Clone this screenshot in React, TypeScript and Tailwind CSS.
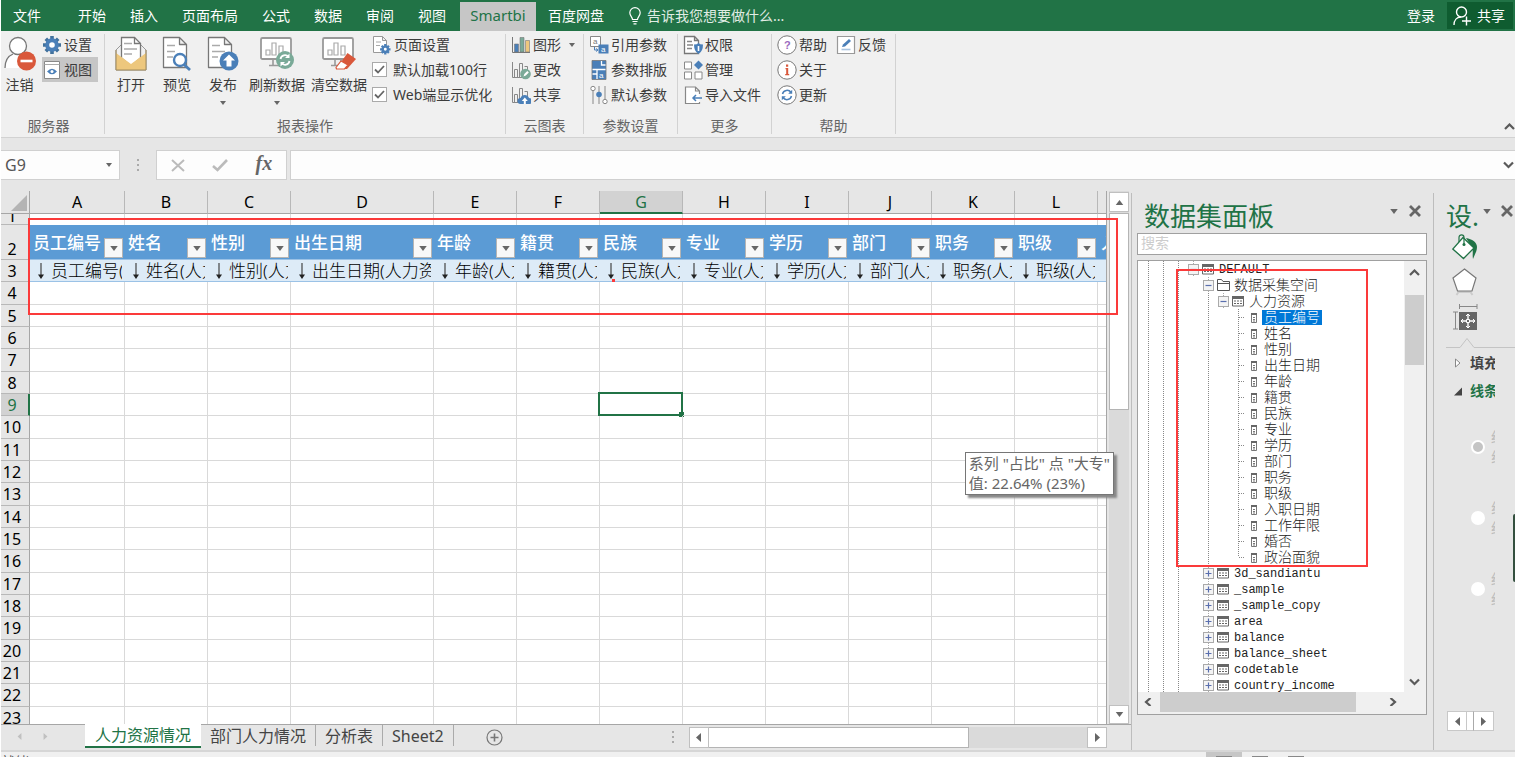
import React, { useState } from 'react';

type IconProps = { className?: string };

/* ---------- Icons ---------- */

const CaretDown: React.FC<IconProps> = ({ className = 'w-[6px] h-[4px] fill-[#666]' }) => (
    <svg viewBox="0 0 6 4" className={className} aria-hidden="true"><path d="M0 0h6L3 4z" /></svg>
);

const CaretLeft: React.FC<IconProps> = ({ className = 'w-[5px] h-[9px] fill-[#666]' }) => (
    <svg viewBox="0 0 5 9" className={className} aria-hidden="true"><path d="M5 0v9L0 4.5z" /></svg>
);

const CaretRight: React.FC<IconProps> = ({ className = 'w-[5px] h-[9px] fill-[#666]' }) => (
    <svg viewBox="0 0 5 9" className={className} aria-hidden="true"><path d="M0 0v9l5-4.5z" /></svg>
);

const chevrons = {
    up: 'M1 6l4.5-4.5L10 6',
    down: 'M1 1.5L5.500 6 10 1.500',
    left: 'M7.500 0L3 4l4.500 4',
    right: 'M3.500 0L8 4 3.500 8',
};

const Chevron: React.FC<{ dir: keyof typeof chevrons }> = ({ dir }) => (
    <svg viewBox="0 0 11 8" className="w-[11px] h-2" fill="none" stroke="#5a5a5a" strokeWidth="2.200" aria-hidden="true">
        <path d={chevrons[dir]} />
    </svg>
);

const Cross: React.FC = () => (
    <svg viewBox="0 0 12 12" className="w-3 h-3" stroke="#666" strokeWidth="2.800" aria-hidden="true">
        <path d="M1 1l10 10M11 1L1 11" />
    </svg>
);

const Page: React.FC = () => (
    <path d="M1.500 1.500h16l7 7v23h-23zM17.500 1.500v7h7" fill="#fff" stroke="#777" strokeWidth="1.300" strokeLinejoin="round" />
);

const LogoutIcon: React.FC = () => (
    <svg viewBox="0 0 32 36" className="w-8 h-9" aria-hidden="true">
        <path d="M1 32C1 23 6 18 14 18s12 5 13 14z" fill="#fff" />
        <path d="M1 32C1 24 4 20 9 18" fill="none" stroke="#777" strokeWidth="1.300" />
        <circle cx="14" cy="10" r="8.500" fill="#fff" stroke="#777" strokeWidth="1.300" />
        <circle cx="22.500" cy="25" r="9.500" fill="#d9583b" />
        <path d="M16.500 25h12" stroke="#fff" strokeWidth="2.600" />
    </svg>
);

const OpenIcon: React.FC = () => (
    <svg viewBox="0 0 32 36" className="w-8 h-9" aria-hidden="true">
        <path d="M1 14l5-5h20l5 5v20H1z" fill="#f0f0f0" stroke="#999" strokeWidth="1" />
        <path d="M6.500 1.500h13l6 6V22L16 30l-9.500-8z" fill="#fff" stroke="#777" strokeWidth="1.300" />
        <path d="M19.500 1.500v6h6" fill="none" stroke="#777" strokeWidth="1.300" />
        <path d="M9 7.500h8M9 13h13M9 18h8" stroke="#aaa" strokeWidth="1.300" />
        <path d="M1 17l15 11 15-11v17H1z" fill="#edc77d" />
        <path d="M1 14v20h30V14" fill="none" stroke="#a08a5c" strokeWidth="1" />
    </svg>
);

const PreviewIcon: React.FC = () => (
    <svg viewBox="0 0 30 36" className="w-[30px] h-9" aria-hidden="true">
        <Page />
        <path d="M5 9.500h8M5 15.500h8M5 21h6" stroke="#aaa" strokeWidth="1.300" />
        <circle cx="18" cy="24" r="6" fill="#fff" stroke="#4a7fb8" strokeWidth="2.400" />
        <path d="M22 28.500l6 5.500" stroke="#4a7fb8" strokeWidth="2.800" />
    </svg>
);

const PublishIcon: React.FC = () => (
    <svg viewBox="0 0 32 36" className="w-8 h-9" aria-hidden="true">
        <Page />
        <path d="M5 9.500h8M5 15.500h13M5 21h6" stroke="#aaa" strokeWidth="1.300" />
        <circle cx="22" cy="25" r="9.500" fill="#4a7fb8" />
        <path d="M22 18.500l-6 6h3.500v6h5v-6H28z" fill="#fff" />
    </svg>
);

const Screen: React.FC = () => (
    <>
        <rect x="1" y="2" width="30" height="21" rx="1.500" fill="#fff" stroke="#999" strokeWidth="1.800" />
        <path d="M6 19v-5h4v5zM12 19V7h4v12zM19 19v-9h4v9z" fill="#fff" stroke="#aaa" strokeWidth="1.200" />
        <path d="M13 23v6M19 23v6M9 29.500h14" stroke="#999" strokeWidth="1.600" />
    </>
);

const RefreshDataIcon: React.FC = () => (
    <svg viewBox="0 0 34 36" className="w-[34px] h-9" aria-hidden="true">
        <Screen />
        <circle cx="25" cy="24" r="9" fill="#7aaa98" />
        <path d="M20.500 23a4.500 4.500 0 0 1 8-2M29.500 25a4.500 4.500 0 0 1-8 2" fill="none" stroke="#fff" strokeWidth="1.800" />
        <path d="M29.500 17.500v4.500H25zM20.500 30.500V26H25z" fill="#fff" />
    </svg>
);

const ClearDataIcon: React.FC = () => (
    <svg viewBox="0 0 34 36" className="w-[34px] h-9" aria-hidden="true">
        <Screen />
        <path d="M25.500 17l8.500 6-9 10H14z" fill="#d9583b" />
        <path d="M19 25l7 4-3.500 4H14.500l-.500-1.500z" fill="#fff" stroke="#d9583b" strokeWidth="1.200" />
    </svg>
);

const gearTeeth = 'M10 1v18M1 10h18M3.800 3.800l12.400 12.400M16.200 3.800L3.800 16.200';

const GearIcon: React.FC = () => (
    <svg viewBox="0 0 20 20" className="w-5 h-5" aria-hidden="true">
        <path d={gearTeeth} stroke="#41719c" strokeWidth="3.600" />
        <circle cx="10" cy="10" r="4.800" fill="#fff" stroke="#4a7fb8" strokeWidth="4" />
    </svg>
);

const ViewIcon: React.FC = () => (
    <svg viewBox="0 0 20 20" className="w-5 h-5" aria-hidden="true">
        <path d="M2.500 1.500h15v17h-15z" fill="#fff" stroke="#888" />
        <path d="M2.500 4.500h15" stroke="#aaa" />
        <path d="M5 11.500q5-5.500 10 0q-5 5.500-10 0z" fill="#4a7fb8" />
        <circle cx="10" cy="11.500" r="1.500" fill="#fff" />
    </svg>
);

const PageSetupIcon: React.FC = () => (
    <svg viewBox="0 0 20 20" className="w-5 h-5" aria-hidden="true">
        <path d="M1.500 1.500h9l4 4v12h-13zM10.500 1.500v4h4" fill="#fff" stroke="#999" />
        <path d="M4 7h5M4 10.500h4" stroke="#aaa" />
        <g transform="translate(7.500 8.500) scale(.58)">
            <path d={gearTeeth} stroke="#4a7fb8" strokeWidth="4" />
            <circle cx="10" cy="10" r="4.500" fill="#fff" stroke="#4a7fb8" strokeWidth="4" />
        </g>
    </svg>
);

const ChartIcon: React.FC = () => (
    <svg viewBox="0 0 20 20" className="w-5 h-5" aria-hidden="true">
        <path d="M1.500 2v15.500H19" fill="none" stroke="#777" />
        <path d="M3.500 9h4v8h-4z" fill="#4a7fb8" />
        <path d="M9 2.500h4V17H9z" fill="#7aaa98" />
        <path d="M14.500 5.500h4V17h-4z" fill="#edc77d" />
        <path d="M3.500 9h4v8h-4zM9 2.500h4V17H9zM14.500 5.500h4V17h-4z" fill="none" stroke="#777" strokeWidth=".6" />
    </svg>
);

const Bars: React.FC = () => (
    <path d="M1.500 2v15.500H12M3.500 9.500h3v8h-3zM8.500 3.500h3v14h-3zM13.500 6.500h3v7" fill="none" stroke="#888" />
);

const ChartEditIcon: React.FC = () => (
    <svg viewBox="0 0 20 20" className="w-5 h-5" aria-hidden="true">
        <Bars />
        <circle cx="14.500" cy="14" r="5.300" fill="#7aaa98" />
        <path d="M12.500 16.500l.8-2.500 3-3 1.500 1.500-3 3z" fill="#fff" />
    </svg>
);

const ChartShareIcon: React.FC = () => (
    <svg viewBox="0 0 20 20" className="w-5 h-5" aria-hidden="true">
        <Bars />
        <path d="M9.500 19a3 3 0 0 1 0-6 4.500 4.500 0 0 1 8.500 0 3 3 0 0 1 0 6z" fill="#4a7fb8" />
        <path d="M13.800 12.500l-3 3.500h2v3h2v-3h2z" fill="#fff" />
    </svg>
);

const RefParamIcon: React.FC = () => (
    <svg viewBox="0 0 20 20" className="w-5 h-5" aria-hidden="true">
        <path d="M1.500 1.500h10v10h-10z" fill="#fff" stroke="#888" />
        <path d="M9.500 9.500h10v9h-10z" fill="#4a7fb8" />
        <path d="M5.500 12v3h3M7 13.500L9 15l-2 1.500" fill="none" stroke="#4a7fb8" />
        <text x="4" y="9" fontSize="8" fill="#777" fontFamily="Liberation Sans, sans-serif">a</text>
        <text x="12" y="17" fontSize="8" fill="#fff" fontFamily="Liberation Sans, sans-serif">a</text>
    </svg>
);

const LayoutParamIcon: React.FC = () => (
    <svg viewBox="0 0 20 20" className="w-5 h-5" aria-hidden="true">
        <path d="M3 .5h14v19H3z" fill="#4a7fb8" stroke="#777" strokeWidth=".8" />
        <path d="M12.500 1v4h4M3.500 9.500h13M8 9.500V19M3.500 14H8" fill="none" stroke="#fff" strokeWidth="1.300" />
        <text x="10" y="17.500" fontSize="8" fill="#fff" fontFamily="Liberation Sans, sans-serif">a</text>
    </svg>
);

const DefaultParamIcon: React.FC = () => (
    <svg viewBox="0 0 20 20" className="w-5 h-5" fill="#fff" stroke="#888" aria-hidden="true">
        <path d="M4 6v13M10 1v18M16 1v13" />
        <circle cx="4" cy="3.500" r="2.200" />
        <circle cx="16" cy="16.500" r="2.200" />
        <circle cx="10" cy="9.500" r="2.800" fill="#4a7fb8" stroke="none" />
    </svg>
);

const PermissionIcon: React.FC = () => (
    <svg viewBox="0 0 20 20" className="w-5 h-5" aria-hidden="true">
        <path d="M1.500 1.500h10l4 4v13h-14zM11.500 1.500v4h4" fill="#fff" stroke="#777" strokeWidth="1.300" />
        <path d="M4 6.500h5M4 10h6M4 13.500h5" stroke="#888" strokeWidth="1.300" />
        <path d="M11 9.500q3 0 4.500-1.500 1.500 1.500 4.500 1.500 0 7-4.500 9.500-4.500-2.500-4.500-9.500z" fill="#4a7fb8" />
        <path d="M15.500 11v5" stroke="#fff" strokeWidth="1.600" />
    </svg>
);

const ManageIcon: React.FC = () => (
    <svg viewBox="0 0 20 20" className="w-5 h-5" aria-hidden="true">
        <path d="M1.500 2h7v7h-7zM1.500 12h7v7h-7zM12 12h7v7h-7z" fill="#fff" stroke="#888" />
        <path d="M15.500.5L20 5l-4.500 4.500L11 5z" fill="#4a7fb8" />
    </svg>
);

const ImportIcon: React.FC = () => (
    <svg viewBox="0 0 20 20" className="w-5 h-5" aria-hidden="true">
        <path d="M16.500 9V6l-4-4h-10v16.500h14V17M12.500 2v4h4" fill="#fff" stroke="#888" strokeWidth="1.200" />
        <path d="M19 13H10M13 10l-3 3 3 3" fill="none" stroke="#4a7fb8" strokeWidth="1.500" />
    </svg>
);

const Ring: React.FC<{ children: React.ReactNode }> = ({ children }) => (
    <svg viewBox="0 0 20 20" className="w-5 h-5" aria-hidden="true">
        <circle cx="10" cy="10" r="9.200" fill="#fff" stroke="#777" />
        {children}
    </svg>
);

const HelpIcon: React.FC = () => (
    <Ring><text x="7" y="14" fontSize="11" fontWeight="bold" fill="#9b6bc0" fontFamily="Liberation Sans, sans-serif">?</text></Ring>
);

const AboutIcon: React.FC = () => (
    <Ring><path d="M9 4.500h2.200v2.300H9zM8.500 8h2.700v6h1v1.200H8.200V14h1V9.200h-.7z" fill="#d9583b" /></Ring>
);

const UpdateIcon: React.FC = () => (
    <Ring>
        <path d="M5.500 9a4.700 4.700 0 0 1 8.500-1.500M14.500 11A4.700 4.700 0 0 1 6 12.500" fill="none" stroke="#4a7fb8" strokeWidth="1.500" />
        <path d="M15.200 4.800v4h-4zM4.800 15.200v-4h4z" fill="#4a7fb8" />
    </Ring>
);

const FeedbackIcon: React.FC = () => (
    <svg viewBox="0 0 20 20" className="w-5 h-5" aria-hidden="true">
        <path d="M1.500 1.500h17v17h-17z" fill="#fff" stroke="#999" strokeWidth="1.200" />
        <path d="M6 12l1-2.500L13 4l2 2-6 5.500z" fill="#4a7fb8" />
        <path d="M5.500 14.500h9" stroke="#a9c4e0" strokeWidth="1.600" />
    </svg>
);

/* ---------- Ribbon ---------- */

const tabs = ['开始', '插入', '页面布局', '公式', '数据', '审阅', '视图'];

const TitleBar: React.FC = () => (
    <header className="flex h-[31px] shrink-0 items-stretch bg-[#217346] text-sm text-white">
        <button className="w-[65px] pl-3 text-left">文件</button>
        {tabs.map((tab) => (
            <button key={tab} className="px-3">{tab}</button>
        ))}
        <button className="mt-[2px] ml-[2px] w-[76px] bg-[#c6c6c6] pb-[2px] text-[15px] text-[#217346]">Smartbi</button>
        <button className="px-3">百度网盘</button>
        <label className="ml-[13px] flex min-w-0 flex-1 items-center gap-[6px]">
            <svg viewBox="0 0 12 18" className="h-[18px] w-3" fill="none" stroke="#fff" strokeWidth="1.200" aria-hidden="true">
                <path d="M3.500 12.500C3.500 10 .8 9 .8 5.800a5.200 5.200 0 0 1 10.400 0c0 3.200-2.700 4.200-2.700 6.700zM3.500 14.500h5M4.500 16.800h3" />
            </svg>
            <input aria-label="告诉我" placeholder="告诉我您想要做什么..." className="w-40 bg-transparent outline-none placeholder:text-[#e0ece4]" />
        </label>
        <button className="px-3">登录</button>
        <button className="my-[2px] mr-[2px] flex w-[66px] items-center gap-[6px] bg-[#0f5c30] pl-[6px]">
            <svg viewBox="0 0 18 20" className="h-5 w-[18px] shrink-0" fill="none" stroke="#fff" strokeWidth="1.400" aria-hidden="true">
                <circle cx="8.500" cy="6" r="5" />
                <path d="M1 19c0-5 3-8 7-8M9 15h9M13.500 10.500v9" />
            </svg>
            共享
        </button>
    </header>
);

const Group: React.FC<{ label: string; className: string; children: React.ReactNode }> = ({ label, className, children }) => (
    <section className={`my-[3px] flex shrink-0 flex-col justify-between border-r border-[#d2d2d2] ${className}`}>
        <div className="-mt-[2px] flex">{children}</div>
        <div className="text-center text-sm leading-4 text-[#666]">{label}</div>
    </section>
);

const BigButton: React.FC<{ icon: React.ReactNode; label: string; className: string; menu?: boolean }> = ({ icon, label, className, menu }) => (
    <button className={`flex shrink-0 flex-col items-center whitespace-nowrap pt-1 ${className}`}>
        {icon}
        <span className="mt-[3px] leading-5">{label}</span>
        {menu && <CaretDown className="mt-[6px] h-[4px] w-[6px] fill-[#666]" />}
    </button>
);

const SmallButton: React.FC<{ icon: React.ReactNode; label: string; active?: boolean; menu?: boolean }> = ({ icon, label, active, menu }) => (
    <button className={`flex h-[25px] items-center gap-[2px] whitespace-nowrap pr-[6px] ${active ? 'bg-[#c6c6c6]' : ''}`}>
        {icon}
        <span>{label}</span>
        {menu && <CaretDown className="ml-[6px] h-[4px] w-[6px] fill-[#666]" />}
    </button>
);

const RibbonCheck: React.FC<{ label: string }> = ({ label }) => (
    <label className="flex h-[25px] items-center gap-[6px] whitespace-nowrap">
        <span className="relative flex h-[15px] w-[15px]">
            <input type="checkbox" defaultChecked className="peer h-[15px] w-[15px] appearance-none border border-[#aaa] bg-white" />
            <svg viewBox="0 0 15 15" className="pointer-events-none absolute inset-0 hidden peer-checked:block" fill="none" stroke="#666" strokeWidth="1.800" aria-hidden="true">
                <path d="M3 7.500l3 3L12 4" />
            </svg>
        </span>
        {label}
    </label>
);

const Ribbon: React.FC = () => (
    <div className="relative flex h-[107px] shrink-0 border-b border-[#d2d2d2] bg-[#f0f0f0] text-sm text-[#3c3c3c]">
        <Group label="服务器" className="w-[104px] pr-2">
            <BigButton icon={<LogoutIcon />} label="注销" className="w-[37px]" />
            <div className="ml-1 flex flex-col">
                <SmallButton icon={<GearIcon />} label="设置" />
                <SmallButton icon={<ViewIcon />} label="视图" active />
            </div>
        </Group>
        <Group label="报表操作" className="w-[401px]">
            <BigButton icon={<OpenIcon />} label="打开" className="ml-[3px] w-[46px]" />
            <BigButton icon={<PreviewIcon />} label="预览" className="w-[46px]" />
            <BigButton icon={<PublishIcon />} label="发布" className="w-[46px]" menu />
            <BigButton icon={<RefreshDataIcon />} label="刷新数据" className="w-[62px]" menu />
            <BigButton icon={<ClearDataIcon />} label="清空数据" className="w-[62px]" />
            <div className="ml-[2px] flex flex-col">
                <SmallButton icon={<PageSetupIcon />} label="页面设置" />
                <RibbonCheck label="默认加载100行" />
                <RibbonCheck label="Web端显示优化" />
            </div>
        </Group>
        <Group label="云图表" className="w-[78px]">
            <div className="ml-[5px] flex flex-col">
                <SmallButton icon={<ChartIcon />} label="图形" menu />
                <SmallButton icon={<ChartEditIcon />} label="更改" />
                <SmallButton icon={<ChartShareIcon />} label="共享" />
            </div>
        </Group>
        <Group label="参数设置" className="w-[94px]">
            <div className="ml-[5px] flex flex-col">
                <SmallButton icon={<RefParamIcon />} label="引用参数" />
                <SmallButton icon={<LayoutParamIcon />} label="参数排版" />
                <SmallButton icon={<DefaultParamIcon />} label="默认参数" />
            </div>
        </Group>
        <Group label="更多" className="w-[94px]">
            <div className="ml-[5px] flex flex-col">
                <SmallButton icon={<PermissionIcon />} label="权限" />
                <SmallButton icon={<ManageIcon />} label="管理" />
                <SmallButton icon={<ImportIcon />} label="导入文件" />
            </div>
        </Group>
        <Group label="帮助" className="w-[124px]">
            <div className="ml-[5px] flex flex-col">
                <SmallButton icon={<HelpIcon />} label="帮助" />
                <SmallButton icon={<AboutIcon />} label="关于" />
                <SmallButton icon={<UpdateIcon />} label="更新" />
            </div>
            <div className="ml-[3px] flex flex-col">
                <SmallButton icon={<FeedbackIcon />} label="反馈" />
            </div>
        </Group>
        <button aria-label="折叠功能区" className="mb-[6px] ml-auto self-end"><Chevron dir="up" /></button>
    </div>
);

const FormulaBar: React.FC = () => (
    <div className="flex h-[53px] shrink-0 items-stretch pt-3 pb-[11px]">
        <div className="flex w-[119px] items-center border border-l-0 border-[#d0d0d0] bg-[#fdfdfd] pr-[7px]">
            <input aria-label="名称框" defaultValue="G9" className="min-w-0 flex-1 bg-transparent pl-1 text-base text-[#555] outline-none" />
            <CaretDown />
        </div>
        <div className="flex w-9 flex-col items-center justify-center gap-[3px]">
            <i className="h-[2px] w-[2px] bg-[#aaa]" />
            <i className="h-[2px] w-[2px] bg-[#aaa]" />
            <i className="h-[2px] w-[2px] bg-[#aaa]" />
        </div>
        <div className="flex w-[131px] items-center justify-around border border-[#d0d0d0] bg-[#fdfdfd]">
            <button aria-label="取消">
                <svg viewBox="0 0 14 13" className="h-[13px] w-[14px]" stroke="#bbb" strokeWidth="2" aria-hidden="true"><path d="M1 1l12 11M13 1L1 12" /></svg>
            </button>
            <button aria-label="输入">
                <svg viewBox="0 0 16 13" className="h-[13px] w-4" fill="none" stroke="#bbb" strokeWidth="2.600" aria-hidden="true"><path d="M1 7l4.500 4L15 1" /></svg>
            </button>
            <button className="pb-1 font-['Liberation_Serif',serif] text-xl leading-5 font-bold text-[#666] italic">fx</button>
        </div>
        <div className="ml-[3px] flex min-w-0 flex-1 items-center border border-r-0 border-[#d0d0d0] bg-[#fdfdfd] pr-[1px]">
            <input aria-label="编辑栏" className="min-w-0 flex-1 bg-transparent px-2 outline-none" />
            <Chevron dir="down" />
        </div>
    </div>
);

/* ---------- Worksheet ---------- */

const columns = [
    { id: 'A', field: '员工编号', width: 'w-[95px]' },
    { id: 'B', field: '姓名', width: 'w-[83px]' },
    { id: 'C', field: '性别', width: 'w-[83px]' },
    { id: 'D', field: '出生日期', width: 'w-[143px]' },
    { id: 'E', field: '年龄', width: 'w-[83px]' },
    { id: 'F', field: '籍贯', width: 'w-[83px]' },
    { id: 'G', field: '民族', width: 'w-[83px]' },
    { id: 'H', field: '专业', width: 'w-[83px]' },
    { id: 'I', field: '学历', width: 'w-[83px]' },
    { id: 'J', field: '部门', width: 'w-[83px]' },
    { id: 'K', field: '职务', width: 'w-[83px]' },
    { id: 'L', field: '职级', width: 'w-[83px]' },
    { id: 'M', field: '入职日期', width: 'w-[83px]' },
];

const emptyRows = Array.from({ length: 20 }, (_, i) => i + 4);

const rowHead = 'border-r border-b border-r-[#a6a6a6] border-b-[#b8b8b8] bg-[#e6e6e6] p-0 pr-[6px] font-normal';

const Sheet: React.FC = () => (
    <div className="min-w-0 flex-1 overflow-hidden border-r border-[#a6a6a6] bg-white">
        <table className="w-0 table-fixed border-separate border-spacing-0 text-base leading-5 text-black">
            <colgroup>
                <col className="w-[29px]" />
                {columns.map((c) => <col key={c.id} className={c.width} />)}
            </colgroup>
            <thead>
                <tr className="h-[23px] bg-[#e6e6e6]">
                    <th className="border-r border-b border-[#a6a6a6] p-0" aria-label="全选">
                        <svg viewBox="0 0 16 16" className="mt-[2px] ml-auto mr-[2px] h-4 w-4 fill-[#b4b4b4]" aria-hidden="true"><path d="M16 0v16H0z" /></svg>
                    </th>
                    {columns.map((c) => (
                        <th
                            key={c.id}
                            className={`border-r border-r-[#b8b8b8] p-0 font-normal ${
                                c.id === 'G' ? 'border-b-2 border-b-[#217346] bg-[#d2d2d2] text-[#217346]' : 'border-b border-b-[#a6a6a6]'
                            }`}
                        >
                            {c.id === 'M' ? '' : c.id}
                        </th>
                    ))}
                </tr>
            </thead>
            <tbody>
                <tr>
                    <th className={rowHead}>
                        <div className="flex h-[10px] items-end justify-center overflow-hidden"><span className="leading-4">1</span></div>
                    </th>
                    {columns.map((c) => <td key={c.id} className="border-r border-[#d9d9d9] p-0" />)}
                </tr>
                <tr className="h-[35px]">
                    <th className={`${rowHead} align-bottom`}>2</th>
                    {columns.map((c) => (
                        <td key={c.id} className="border-b border-[#9bc2e6] bg-[#5b9bd5] p-0">
                            <div className="relative h-[34px] overflow-hidden pt-2 pl-[3px] text-[17px] font-medium whitespace-nowrap text-white">
                                {c.field}
                                <button aria-label={`筛选${c.field}`} className="absolute right-[2px] bottom-[1px] flex h-5 w-[19px] items-center justify-center border border-[#b4b4b4] bg-[#f8f8f8]">
                                    <CaretDown className="h-[5px] w-2 fill-[#666]" />
                                </button>
                            </div>
                        </td>
                    ))}
                </tr>
                <tr className="h-[22px]">
                    <th className={rowHead}>3</th>
                    {columns.map((c) => (
                        <td key={c.id} className="relative border-b border-[#9bc2e6] bg-[#ddebf7] p-0">
                            <div className="mr-[3px] flex h-[21px] items-center overflow-hidden pl-[5px] text-[17px] font-light whitespace-nowrap">
                                <svg viewBox="0 0 6 16" className="mr-[7px] ml-[3px] h-4 w-[6px] shrink-0" aria-hidden="true">
                                    <path d="M3 0v13" stroke="#444" strokeWidth="1.200" />
                                    <path d="M0 11.500h6L3 16z" fill="#222" />
                                </svg>
                                {c.field}(人力资源)
                            </div>
                            {c.id === 'G' && <i className="absolute bottom-[-1px] left-3 h-[3px] w-[3px] bg-[#fb3a3a]" />}
                        </td>
                    ))}
                </tr>
                {emptyRows.map((n, i) => (
                    <tr key={n} className={i % 3 === 0 ? 'h-[23px]' : 'h-[22px]'}>
                        <th className={n === 9 ? 'border-r-2 border-b border-r-[#217346] border-b-[#b8b8b8] bg-[#d2d2d2] p-0 pr-[5px] font-normal text-[#217346]' : rowHead}>{n}</th>
                        {columns.map((c) => (
                            <td key={c.id} className="relative border-r border-b border-[#d9d9d9] p-0">
                                {n === 9 && c.id === 'G' && (
                                    <div className="absolute -inset-[2px] right-[-1px] bottom-[-1px] border-2 border-[#217346]">
                                        <i className="absolute -right-[3px] -bottom-[3px] h-[5px] w-[5px] bg-[#217346]" />
                                    </div>
                                )}
                            </td>
                        ))}
                    </tr>
                ))}
            </tbody>
        </table>
    </div>
);

const SheetTabs: React.FC = () => {
    const [current, setCurrent] = useState('人力资源情况');

    return (
        <div className="flex h-[26px] shrink-0 border-t border-[#a6a6a6] pb-[2px] text-base text-[#444]">
            <div className="flex w-[84px] items-center gap-[21px] pl-4">
                <CaretLeft className="h-[7px] w-[5px] fill-[#c0c0c0]" />
                <CaretRight className="h-[7px] w-[5px] fill-[#c0c0c0]" />
            </div>
            {['人力资源情况', '部门人力情况', '分析表', 'Sheet2'].map((name) => (
                <button
                    key={name}
                    onClick={() => setCurrent(name)}
                    className={`shrink-0 leading-5 ${
                        name === current ? '-mt-px border-b-2 border-[#217346] bg-white px-[10px] text-[#217346]' : 'mb-[2px] border-r border-[#aaa] px-[9px]'
                    }`}
                >
                    {name}
                </button>
            ))}
            <button aria-label="新工作表" className="ml-8 pt-[2px]">
                <svg viewBox="0 0 17 17" className="h-[17px] w-[17px]" fill="none" stroke="#777" strokeWidth="1.200" aria-hidden="true">
                    <circle cx="8.500" cy="8.500" r="7.500" />
                    <path d="M8.500 4.500v8M4.500 8.500h8" strokeWidth="1.600" />
                </svg>
            </button>
            <div className="mr-[14px] ml-auto flex w-[3px] flex-col items-center justify-center gap-[3px]">
                <i className="h-[2px] w-[2px] bg-[#aaa]" />
                <i className="h-[2px] w-[2px] bg-[#aaa]" />
                <i className="h-[2px] w-[2px] bg-[#aaa]" />
            </div>
            <div className="mt-[2px] mr-6 flex w-[37%] items-stretch bg-[#dadada]">
                <button aria-label="向左滚动" className="flex w-5 items-center justify-center border border-[#c0c0c0] bg-white"><CaretLeft /></button>
                <div className="w-[260px] border border-l-0 border-[#b4b4b4] bg-white" />
                <button aria-label="向右滚动" className="ml-auto flex w-5 items-center justify-center border border-[#c0c0c0] bg-white"><CaretRight /></button>
            </div>
        </div>
    );
};

const Workbook: React.FC = () => (
    <main className="relative flex min-w-0 flex-1 flex-col">
        <div className="flex min-h-0 flex-1">
            <Sheet />
            <div className="mr-[2px] ml-[2px] flex w-5 flex-col bg-[#dadada] pt-[1px]">
                <button aria-label="向上滚动" className="flex h-5 shrink-0 items-center justify-center border border-[#c0c0c0] bg-white">
                    <CaretDown className="h-[5px] w-[9px] rotate-180 fill-[#666]" />
                </button>
                <div className="mt-[1px] h-[37%] border border-[#b4b4b4] bg-white" />
                <button aria-label="向下滚动" className="mt-auto flex h-[19px] shrink-0 items-center justify-center border border-[#c0c0c0] bg-white">
                    <CaretDown className="h-[5px] w-[9px] fill-[#666]" />
                </button>
            </div>
        </div>
        <SheetTabs />
        {/* highlight around the linked fields */}
        <div className="pointer-events-none absolute top-[27px] right-[13px] left-[27px] h-[97px] border-2 border-[#fb3a3a]" />
        <div role="tooltip" className="absolute top-[261px] right-[17px] border border-[#767676] bg-white px-[3px] pb-px text-[15px] leading-5 whitespace-nowrap text-[#666] shadow-[3px_3px_2px_#888]">
            系列 "占比" 点 "大专"<br />
            值: 22.64% (23%)
        </div>
    </main>
);

/* ---------- Dataset panel ---------- */

type TreeNode = { label: string; kind: 'space' | 'folder' | 'table' | 'field'; open?: boolean };

const fields = ['员工编号', '姓名', '性别', '出生日期', '年龄', '籍贯', '民族', '专业', '学历', '部门', '职务', '职级', '入职日期', '工作年限', '婚否', '政治面貌'];
const tables = ['3d_sandiantu', '_sample', '_sample_copy', 'area', 'balance', 'balance_sheet', 'codetable', 'country_income'];

const Guide: React.FC<{ line?: boolean; last?: boolean; branch?: boolean }> = ({ line, last, branch }) => (
    <svg viewBox="0 0 15 16" className="h-4 w-[15px] shrink-0" stroke="#888" strokeDasharray="1 1" aria-hidden="true">
        {line && <path d={last ? 'M8.500 0v8' : 'M8.500 0v16'} />}
        {branch && <path d="M9 8.500h6" />}
    </svg>
);

const Expander: React.FC<{ open?: boolean }> = ({ open }) => (
    <button aria-label={open ? '折叠' : '展开'} className="h-4 w-[15px] shrink-0">
        <svg viewBox="0 0 15 16" className="h-4 w-[15px]" aria-hidden="true">
            <path d="M8.500 0v16" stroke="#aaa" strokeDasharray="1 1" />
            <rect x="3.500" y="3.500" width="10" height="10" fill="#f4f4f4" stroke="#aaa" />
            <path d={open ? 'M5.500 8.500h6' : 'M5.500 8.500h6M8.500 5.500v6'} stroke="#5a6fae" strokeWidth="1.200" />
        </svg>
    </button>
);

const NodeIcon: React.FC<{ kind: TreeNode['kind'] }> = ({ kind }) => (
    <svg viewBox="0 0 16 16" className="ml-px h-4 w-4 shrink-0" aria-hidden="true">
        {kind === 'folder' && <path d="M1.500 13.500v-11h4l1.500 2h6.500v9zM1.500 6.500h12" fill="#fff" stroke="#555" />}
        {(kind === 'table' || kind === 'space') && (
            <>
                <path d="M1.500 3.500h11v9.500h-11z" fill="#fff" stroke="#666" />
                <path d="M1 3h12v3H1z" fill="#666" />
                <path d="M3 8h2M6 8h2M9 8h2M3 10.500h2M6 10.500h2M9 10.500h2" stroke="#666" />
            </>
        )}
        {kind === 'field' && (
            <>
                <path d="M5.500 4.500h5v9h-5z" fill="#fff" stroke="#777" />
                <path d="M5 4h6v2H5z" fill="#666" />
                <path d="M7 8.500h2M7 10.500h2M7 12h2" stroke="#777" />
            </>
        )}
    </svg>
);

const treeText = "mt-px px-[2px] font-['Liberation_Mono','Noto_Sans_CJK_SC',monospace] leading-4 whitespace-nowrap";

const DatasetTree: React.FC = () => (
    <ul className="min-w-0 flex-1 overflow-hidden bg-white pl-[2px] font-light text-[#222]">
        <li className="flex h-4">
            <Guide line /><Guide line /><Guide line /><Expander open /><NodeIcon kind="space" />
            <span className={`${treeText} text-xs`}>DEFAULT</span>
        </li>
        <li className="flex h-4">
            <Guide line /><Guide line /><Guide line /><Guide /><Expander open /><NodeIcon kind="folder" />
            <span className={`${treeText} text-sm`}>数据采集空间</span>
        </li>
        <li className="flex h-4">
            <Guide line /><Guide line /><Guide line /><Guide /><Guide line /><Expander open /><NodeIcon kind="table" />
            <span className={`${treeText} text-sm`}>人力资源</span>
        </li>
        {fields.map((name, i) => (
            <li key={name} className="flex h-4">
                <Guide line /><Guide line /><Guide line /><Guide /><Guide line /><Guide />
                <Guide line branch last={i === fields.length - 1} />
                <NodeIcon kind="field" />
                <span className={`${treeText} text-sm ${i === 0 ? 'bg-[#0078d7] text-white' : ''}`}>{name}</span>
            </li>
        ))}
        {tables.map((name) => (
            <li key={name} className="flex h-4">
                <Guide line /><Guide line /><Guide line /><Guide /><Expander /><NodeIcon kind="table" />
                <span className={`${treeText} text-xs`}>{name}</span>
            </li>
        ))}
    </ul>
);

const DatasetPanel: React.FC = () => (
    <aside className="mt-[2px] flex w-[302px] shrink-0 flex-col border-l border-[#bdbdbd] pr-[6px] pb-[35px] pl-[5px]">
        <div className="flex h-10 shrink-0 items-start pl-[7px]">
            <h2 className="pt-[5px] text-[26px] leading-9 text-[#217346]">数据集面板</h2>
            <button aria-label="面板选项" className="mt-4 ml-auto"><CaretDown className="h-[5px] w-[10px] fill-[#666]" /></button>
            <button aria-label="关闭" className="mt-3 mr-[6px] ml-[10px]"><Cross /></button>
        </div>
        <input aria-label="搜索" placeholder="搜索" className="h-[22px] shrink-0 border border-[#a0a0a0] bg-white px-[3px] pb-1 text-sm outline-none placeholder:text-[#ccc]" />
        <div className="relative mt-[5px] flex min-h-0 flex-1 flex-col border border-[#a0a0a0] bg-[#f0f0f0] pr-[2px] pb-[2px]">
            <div className="flex min-h-0 flex-1">
                <DatasetTree />
                <div className="flex w-5 shrink-0 flex-col items-center pt-2 pb-[6px]">
                    <Chevron dir="up" />
                    <div className="mt-[18px] h-[70px] w-[19px] bg-[#cdcdcd]" />
                    <div className="mt-auto flex"><Chevron dir="down" /></div>
                </div>
            </div>
            <div className="flex h-5 shrink-0 items-center pr-[26px] pl-[5px]">
                <Chevron dir="left" />
                <div className="mr-auto ml-[6px] h-full w-[77%] bg-[#cdcdcd]" />
                <Chevron dir="right" />
            </div>
            <div className="pointer-events-none absolute top-2 left-[38px] h-[298px] w-[192px] border-2 border-[#fb3a3a]" />
        </div>
    </aside>
);

/* ---------- Format panel ---------- */

const FormatPanel: React.FC = () => (
    <aside className="relative mt-[2px] flex w-[82px] shrink-0 flex-col border-l border-[#bdbdbd]">
        <div className="flex h-[41px] shrink-0 items-start pl-3">
            <h2 className="w-9 pt-[5px] text-[26px] leading-9 text-[#217346]">设.</h2>
            <button aria-label="窗格选项" className="mt-4 shrink-0"><CaretDown className="h-[5px] w-[10px] fill-[#666]" /></button>
            <button aria-label="关闭" className="mt-3 ml-[9px] shrink-0"><Cross /></button>
        </div>
        <div className="flex flex-col items-start gap-2 pl-[18px]">
            <button aria-label="填充与线条">
                <svg viewBox="0 0 26 26" className="h-[26px] w-[26px]" aria-hidden="true">
                    <path d="M14 4c6 1 11 4 11 9 0 4-2 7-4 12-1-5 1-9-2-13z" fill="#217346" />
                    <path d="M11 3.500L22 14 11.500 24.500.8 15z" fill="#fff" stroke="#217346" strokeWidth="1.300" />
                    <path d="M7 8V3.500c0-3.500 5-3.500 5 0V10" fill="none" stroke="#217346" strokeWidth="1.200" />
                    <circle cx="12" cy="10.500" r="1.500" fill="#217346" />
                </svg>
            </button>
            <button aria-label="效果">
                <svg viewBox="0 0 26 28" className="h-7 w-[26px]" aria-hidden="true">
                    <path d="M4.500 27l2-3h12l2 3" fill="none" stroke="#ccc" strokeWidth="2" />
                    <path d="M12.500 1L24 10l-4 13H5.500L1 10z" fill="#fff" stroke="#777" strokeWidth="1.200" />
                </svg>
            </button>
            <button aria-label="大小与属性">
                <svg viewBox="0 0 26 26" className="h-[26px] w-[26px]" fill="none" aria-hidden="true">
                    <path d="M8 2.500h17M7.500 0v5M25 0v5M3.500 8v17M1 8h5M1 25h5" stroke="#888" />
                    <path d="M7 8h18v18H7z" fill="#666" />
                    <path d="M16 10v14M9 17h14" stroke="#fff" strokeWidth="1.400" />
                    <path d="M14 12l2-2 2 2M14 22l2 2 2-2M11 15l-2 2 2 2M21 15l2 2-2 2" stroke="#fff" />
                    <path d="M14.500 15.500h3v3h-3z" fill="#666" stroke="#fff" />
                </svg>
            </button>
        </div>
        <svg viewBox="0 0 69 12" className="mt-[7px] ml-3 h-3 w-[69px] shrink-0" fill="none" stroke="#c4c4c4" aria-hidden="true">
            <path d="M0 10.500h14l7-9 7 9h41" />
        </svg>
        <div className="mr-5 ml-5 overflow-hidden text-sm leading-7 font-bold whitespace-nowrap">
            <button className="flex items-center gap-2 text-[#444]">
                <svg viewBox="0 0 8 10" className="h-[10px] w-2" fill="#fff" stroke="#888" aria-hidden="true"><path d="M1.500 1v8L6 5z" /></svg>
                填充
            </button>
            <button className="flex items-center gap-2 text-[#217346]">
                <svg viewBox="0 0 9 9" className="h-[9px] w-2 fill-[#444]" aria-hidden="true"><path d="M9 0v9H0z" /></svg>
                线条
            </button>
        </div>
        <fieldset disabled className="mt-[22px] flex flex-col gap-[31px] pl-[37px]">
            {['红线', '线红', '红红'].map((text, i) => (
                <label key={text} className="flex h-10 items-center">
                    <input type="radio" name="line" defaultChecked={i === 0} className="h-[14px] w-[14px] shrink-0 appearance-none rounded-full border-2 border-white bg-white checked:bg-[#c4c4c4]" />
                    <span className="ml-[6px] w-1 overflow-hidden text-sm leading-5 break-all text-[#bbb]">{text}</span>
                </label>
            ))}
        </fieldset>
        <div className="mt-auto mb-[19px] ml-[13px] flex h-5 w-[47px] shrink-0">
            <button aria-label="向左滚动" className="flex w-5 items-center justify-center border border-[#c8c8c8] bg-white"><CaretLeft /></button>
            <div className="w-[7px] border-y border-r border-y-[#c8c8c8] border-r-[#aaa] bg-white" />
            <button aria-label="向右滚动" className="flex w-5 items-center justify-center border border-l-0 border-[#c8c8c8] bg-white"><CaretRight /></button>
        </div>
        <div className="absolute top-[321px] right-0 h-[68px] w-[2px] rounded-l bg-[#34503f]" />
    </aside>
);

const StatusBar: React.FC = () => (
    <footer className="flex h-[7px] shrink-0 overflow-hidden border-t-2 border-[#d6d6d6] bg-[#f0f0f0] text-sm text-[#555]">
        <span className="pt-[2px] leading-4">就绪</span>
        <div className="mr-[201px] ml-auto flex">
            {['普通', '页面布局', '分页预览'].map((view, i) => (
                <button key={view} aria-label={view} className={`flex w-9 items-end justify-center ${i === 0 ? 'bg-[#c6c6c6]' : ''}`}>
                    <i className="h-[1px] w-4 bg-[#888]" />
                </button>
            ))}
        </div>
    </footer>
);

const App: React.FC = () => {
    return (
        <div className="h-screen overflow-hidden bg-white pb-[5px] pl-px font-['Noto_Sans','Noto_Sans_CJK_SC',sans-serif]">
            <div className="flex h-full flex-col bg-[#e6e6e6]">
                <TitleBar />
                <Ribbon />
                <FormulaBar />
                <div className="flex min-h-0 flex-1">
                    <Workbook />
                    <DatasetPanel />
                    <FormatPanel />
                </div>
                <StatusBar />
            </div>
        </div>
    );
};

export default App;
